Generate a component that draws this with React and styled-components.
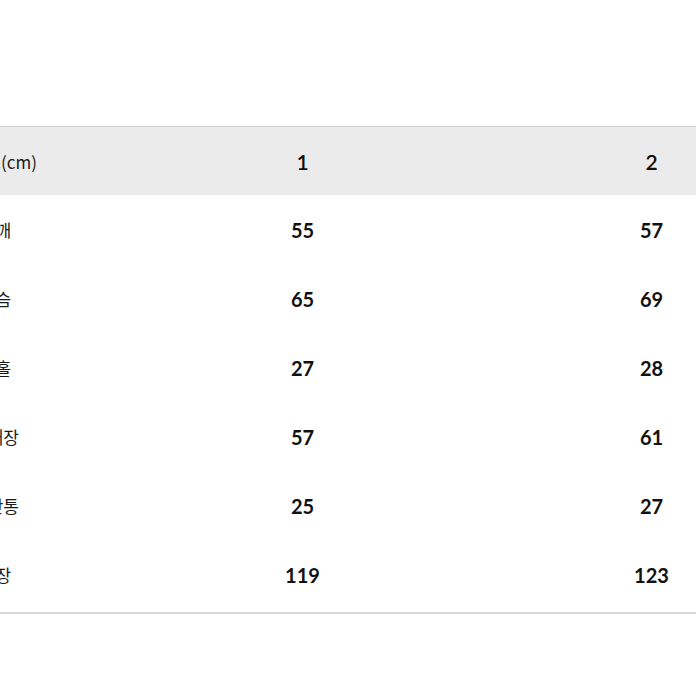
import styled, { createGlobalStyle } from "styled-components";

const GlobalStyle = createGlobalStyle`
  html, body {
    margin: 0;
    padding: 0;
    background: #ffffff;
    overflow: hidden;
  }
  body {
    font-family: Lato, "Noto Sans CJK KR", sans-serif;
    color: #111111;
  }
`;

const Page = styled.div`
  width: 696px;
  height: 696px;
  overflow: hidden;
  padding-top: 126px;
  box-sizing: border-box;
`;

const Table = styled.div`
  width: 963px;
  margin-left: -137px;
  padding-bottom: 3px;
  border-top: 1px solid #cfcfcf;
  border-bottom: 2px solid #d6d6d6;
`;

const Row = styled.div`
  display: grid;
  grid-template-columns: 265px 349px 349px;
  height: ${(p) => (p.$head ? "68px" : "69px")};
  align-items: center;
  background: ${(p) => (p.$head ? "#ebebeb" : "transparent")};
`;

const Label = styled.div`
  text-align: center;
  font-family: "Noto Sans CJK KR", sans-serif;
  font-size: 17px;
  font-weight: 400;
  color: #1a1a1a;
`;

const Cell = styled.div`
  text-align: center;
  font-family: Lato, "Noto Sans CJK KR", sans-serif;
  font-size: ${(p) => (p.$head ? "21px" : "20px")};
  font-weight: ${(p) => (p.$head ? 600 : 700)};
  color: #111111;
`;

const rows = [
  ["어깨", "55", "57"],
  ["가슴", "65", "69"],
  ["암홀", "27", "28"],
  ["소매장", "57", "61"],
  ["밑단통", "25", "27"],
  ["총장", "119", "123"],
];

export default function App() {
  return (
    <>
      <GlobalStyle />
      <Page>
        <Table>
          <Row $head>
            <Label>사이즈(cm)</Label>
            <Cell $head>1</Cell>
            <Cell $head>2</Cell>
          </Row>
          {rows.map(([label, a, b]) => (
            <Row key={label}>
              <Label>{label}</Label>
              <Cell>{a}</Cell>
              <Cell>{b}</Cell>
            </Row>
          ))}
        </Table>
      </Page>
    </>
  );
}
